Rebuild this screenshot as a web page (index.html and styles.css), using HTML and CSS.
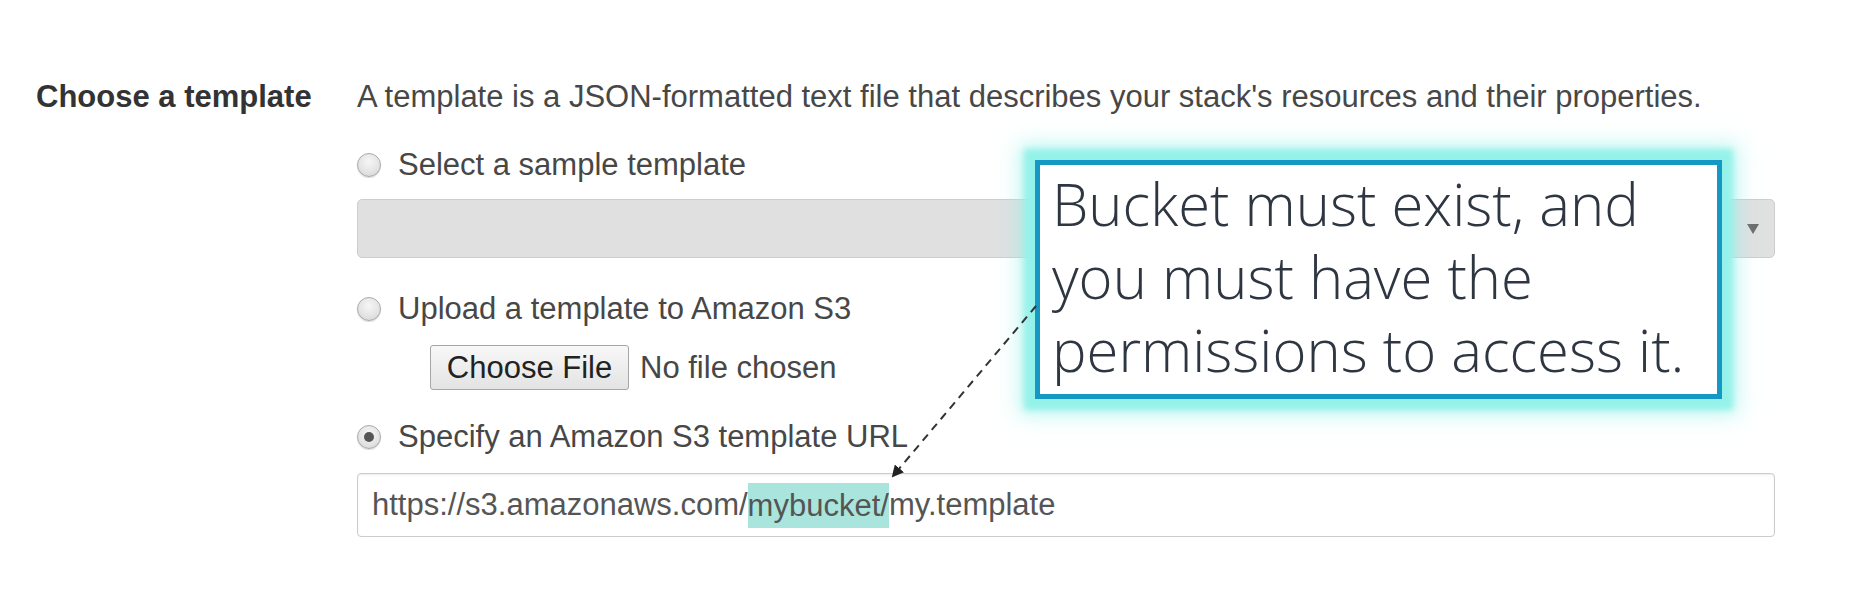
FILE: index.html
```html
<!DOCTYPE html>
<html lang="en">
<head>
<meta charset="utf-8">
<title>Choose a template</title>
<link rel="stylesheet" href="styles.css">
</head>
<body>
<div class="page">
  <div class="form-row">
    <div class="field-label">Choose a template</div>
    <div class="field-body">
      <div class="desc">A template is a JSON-formatted text file that describes your stack's resources and their properties.</div>

      <div class="option opt-sample">
        <span class="radio"></span>
        <span class="option-text">Select a sample template</span>
      </div>
      <div class="select-box"><span class="caret"></span></div>

      <div class="option opt-upload">
        <span class="radio"></span>
        <span class="option-text">Upload a template to Amazon S3</span>
      </div>
      <div class="file-row">
        <span class="file-btn">Choose File</span>
        <span class="file-none">No file chosen</span>
      </div>

      <div class="option opt-url">
        <span class="radio checked"></span>
        <span class="option-text">Specify an Amazon S3 template URL</span>
      </div>
      <div class="url-input">https://s3.amazonaws.com/<span class="hl">mybucket/</span>my.template</div>
    </div>
  </div>

  <div class="callout">
    <p class="callout-text">Bucket must exist, and<br>you must have the<br>permissions to access it.</p>
  </div>

  <svg class="arrow" width="1858" height="602" viewBox="0 0 1858 602">
    <defs>
      <marker id="head" markerWidth="12" markerHeight="12" refX="10" refY="6" orient="auto" markerUnits="userSpaceOnUse">
        <path d="M0,0 L12,6 L0,12 Z" fill="#222"/>
      </marker>
    </defs>
    <line x1="1036" y1="306" x2="893" y2="476" stroke="#333" stroke-width="2" stroke-dasharray="8 6" marker-end="url(#head)"/>
  </svg>
</div>
</body>
</html>
```

FILE: styles.css
```css
html, body {
  margin: 0;
  padding: 0;
  background: #ffffff;
}

.page {
  position: relative;
  width: 1858px;
  height: 602px;
  overflow: hidden;
  font-family: "Liberation Sans", Arial, sans-serif;
  font-size: 31px;
  color: #474747;
}

.form-row {
  display: flex;
  padding-top: 79px;
}

.field-label {
  flex: none;
  width: 357px;
  box-sizing: border-box;
  padding-left: 36px;
  font-weight: bold;
  color: #333;
  line-height: 36px;
}

.field-body {
  flex: none;
  width: 1418px;
  display: flex;
  flex-direction: column;
}

.desc {
  line-height: 36px;
  white-space: nowrap;
}

.option {
  display: flex;
  align-items: center;
  gap: 17px;
  line-height: 36px;
  height: 36px;
}

.opt-sample { margin-top: 32px; }
.opt-upload { margin-top: 33px; }
.opt-url { margin-top: 29px; }

.radio {
  width: 24px;
  height: 24px;
  box-sizing: border-box;
  border-radius: 50%;
  border: 1px solid #a9a9a9;
  background: radial-gradient(circle at 50% 35%, #f6f6f6 0%, #e3e3e3 60%, #d0d0d0 100%);
  box-shadow: 0 1px 1px rgba(0,0,0,0.15);
  flex: none;
  display: flex;
  align-items: center;
  justify-content: center;
}

.radio.checked::after {
  content: "";
  width: 10px;
  height: 10px;
  border-radius: 50%;
  background: #555;
}

.select-box {
  margin-top: 16px;
  height: 59px;
  box-sizing: border-box;
  border: 1px solid #cdcdcd;
  border-radius: 5px;
  background: #e0e0e0;
  display: flex;
  align-items: center;
  justify-content: flex-end;
  padding-right: 15px;
}

.caret {
  width: 0;
  height: 0;
  border-left: 6px solid transparent;
  border-right: 6px solid transparent;
  border-top: 10px solid #6a6a6a;
}

.file-row {
  margin-top: 18px;
  display: flex;
  align-items: center;
  gap: 11px;
  padding-left: 73px;
  height: 45px;
}

.file-btn {
  height: 45px;
  box-sizing: border-box;
  width: 199px;
  display: flex;
  align-items: center;
  justify-content: center;
  border: 1px solid #a6a6a6;
  border-radius: 3px;
  background: linear-gradient(#f8f8f8, #e3e3e3);
  color: #222;
}

.url-input {
  margin-top: 18px;
  height: 64px;
  box-sizing: border-box;
  border: 1px solid #cccccc;
  border-radius: 4px;
  box-shadow: inset 0 1px 2px rgba(0,0,0,0.08);
  padding-left: 14px;
  display: flex;
  align-items: center;
  white-space: pre;
  color: #555;
  background: #fff;
}

.hl {
  background: #a9e5dd;
  line-height: 45px;
  display: inline-block;
}

.arrow {
  position: absolute;
  left: 0;
  top: 0;
  pointer-events: none;
}

.callout {
  position: absolute;
  left: 1035px;
  top: 160px;
  width: 687px;
  height: 239px;
  box-sizing: border-box;
  border: 5px solid #1599c4;
  background: #fff;
  box-shadow: 0 0 6px 11px #95f2ea, 0 0 20px 16px rgba(149,242,234,0.6);
}

.callout-text {
  margin: 0;
  padding: 2px 0 0 12px;
  font-family: "Open Sans", "Noto Sans", sans-serif;
  font-weight: 300;
  font-size: 58px;
  line-height: 73px;
  color: #2e3642;
  white-space: nowrap;
}
```
